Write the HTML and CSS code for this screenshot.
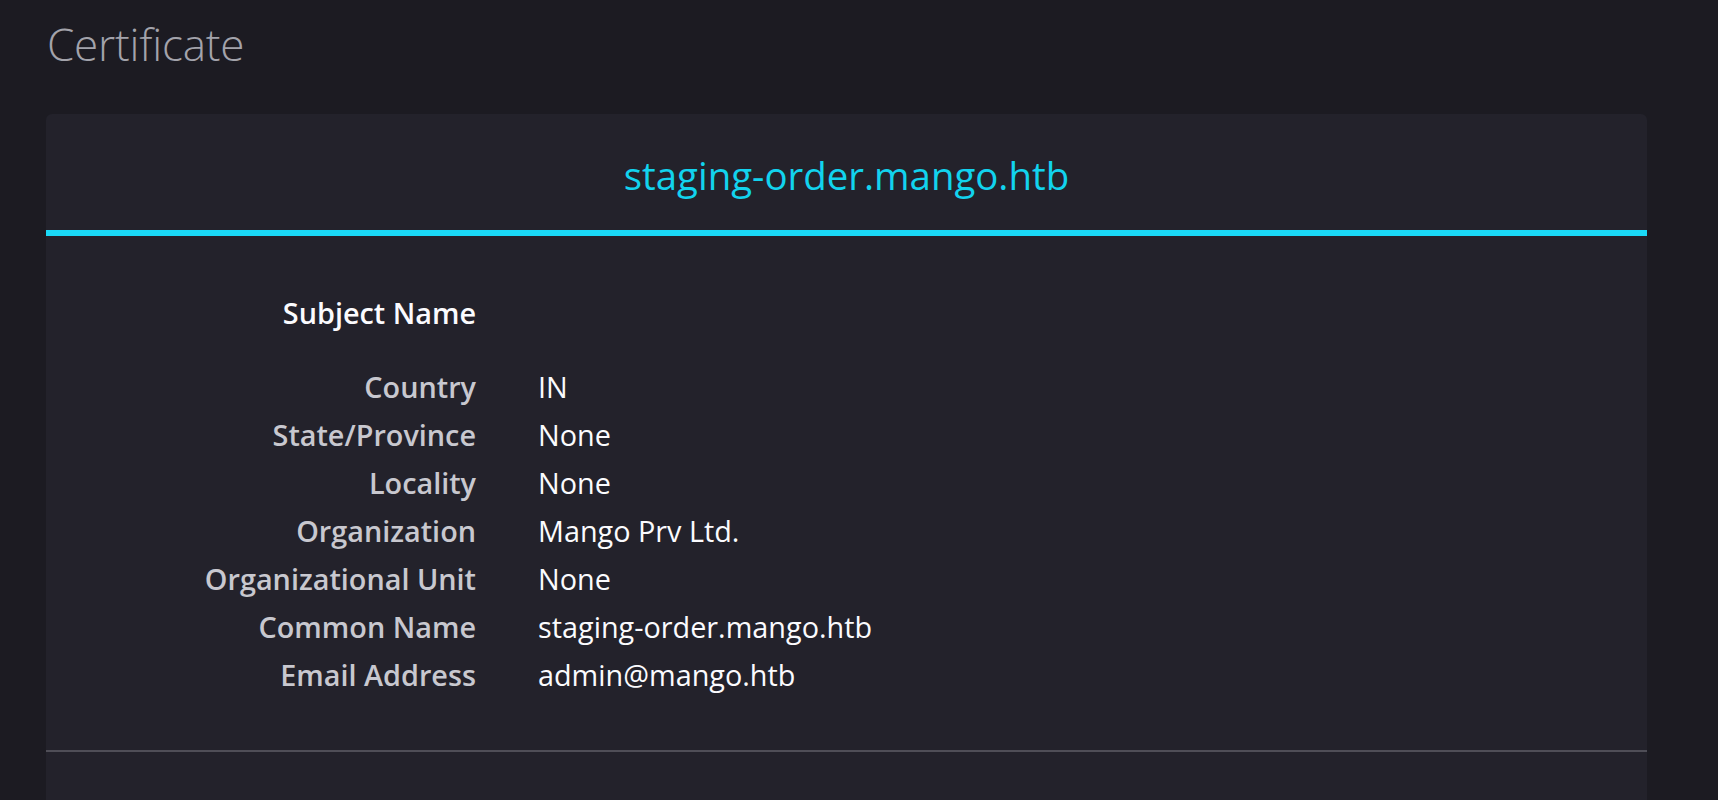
FILE: index.html
```html
<!DOCTYPE html>
<html lang="en">
<head>
<meta charset="utf-8">
<title>Certificate</title>
<link rel="stylesheet" href="styles.css">
</head>
<body>
<main class="page">
  <h1 class="title">Certificate</h1>
  <section class="card">
    <header class="card-head">staging-order.mango.htb</header>
    <div class="card-body">
      <div class="info-grid">
        <div class="label label-strong">Subject Name</div>
        <div class="value"></div>
      </div>
      <div class="info-grid rows">
        <div class="label">Country</div><div class="value">IN</div>
        <div class="label">State/Province</div><div class="value">None</div>
        <div class="label">Locality</div><div class="value">None</div>
        <div class="label">Organization</div><div class="value">Mango Prv Ltd.</div>
        <div class="label">Organizational Unit</div><div class="value">None</div>
        <div class="label">Common Name</div><div class="value">staging-order.mango.htb</div>
        <div class="label">Email Address</div><div class="value">admin@mango.htb</div>
      </div>
    </div>
    <div class="separator"></div>
    <div class="card-rest"></div>
  </section>
</main>
</body>
</html>
```
FILE: styles.css
```css
html, body {
  margin: 0;
  padding: 0;
  background: #1c1b22;
  height: 100%;
  overflow: hidden;
}

body {
  font-family: "Open Sans", "Noto Sans", "DejaVu Sans", sans-serif;
  color: #fbfbfe;
}

.page {
  padding: 0 0 0 46px;
}

.title {
  margin: 0;
  padding: 22px 0 0 1px;
  height: 114px;
  box-sizing: border-box;
  font-size: 44px;
  line-height: 44px;
  font-weight: 300;
  color: #a3a3ab;
  letter-spacing: -0.2px;
}

.card {
  width: 1601px;
  background: #23222b;
  border-radius: 6px 6px 0 0;
  min-height: 700px;
}

.card-head {
  box-sizing: border-box;
  height: 122px;
  padding-top: 7px;
  line-height: 109px;
  text-align: center;
  font-size: 38.4px;
  color: #12d3ee;
  border-bottom: 6px solid #1ad9f7;
}

.card-body {
  padding: 53px 0 51px;
  font-size: 28.8px;
  line-height: 48px;
}

.info-grid {
  display: grid;
  grid-template-columns: 430px 1fr;
  column-gap: 62px;
}

.info-grid.rows {
  margin-top: 26px;
}

.label {
  text-align: right;
  font-weight: 600;
  color: #c8c8cf;
}

.label-strong {
  color: #fbfbfe;
}

.value {
  color: #fbfbfe;
}

.separator {
  height: 2px;
  background: #4f4e57;
}

.card-rest {
  height: 120px;
}
```
